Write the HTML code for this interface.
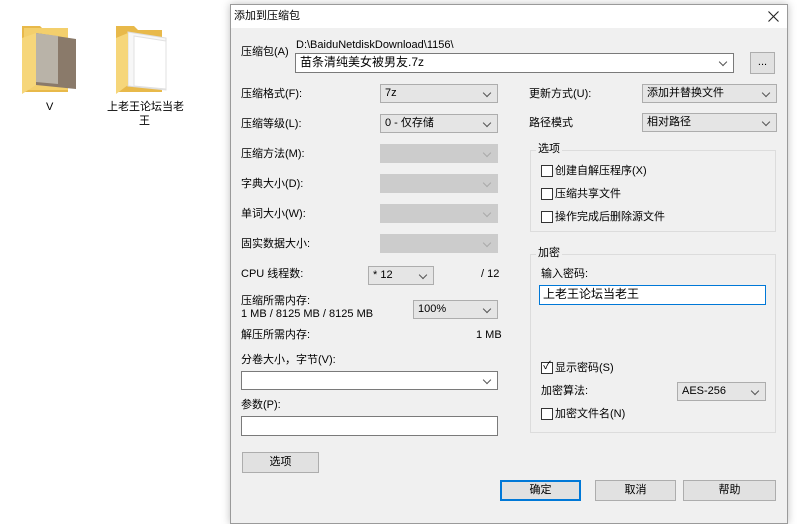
<!DOCTYPE html>
<html><head><meta charset="utf-8"><style>
*{margin:0;padding:0;box-sizing:border-box}
body{width:800px;height:512px;background:#fff;position:relative;overflow:hidden;font-family:"Liberation Sans","Noto Sans CJK SC",sans-serif;font-size:11px;color:#000}
.a{position:absolute;white-space:nowrap;line-height:14px}
.dlg{position:absolute;left:230px;top:4px;width:558px;height:520px;background:#f0f0f0;border:1px solid #9a9a9a;box-shadow:0 0 8px rgba(0,0,0,.25)}
.tb{position:absolute;left:0;top:0;right:0;height:23px;background:#fff}
.cb{position:absolute;height:19px;background:#e5e5e5;border:1px solid #adadad;padding-left:4px;line-height:17px}
.cb.w{background:#fff;border-color:#7a7a7a}
.cb.d{background:#cccccc;border-color:#cccccc}
.cb::after{content:"";position:absolute;right:7px;top:5px;width:5px;height:5px;border-right:1px solid #555;border-bottom:1px solid #555;transform:rotate(45deg)}
.cb.d::after{border-color:#aaa}
.cb.n::after{display:none}
.btn{position:absolute;height:21px;background:#e1e1e1;border:1px solid #adadad;text-align:center;line-height:19px}
.grp{position:absolute;border:1px solid #dcdcdc}
.gt{position:absolute;background:#f0f0f0;padding:0 2px;line-height:14px}
.ck{position:absolute;width:12px;height:12px;border:1px solid #333;background:#fff}
</style></head><body>
<svg style="position:absolute;left:18px;top:18px" width="62" height="80">
<path d="M4 8h18l4 4h24v62H4z" fill="#e8b94a"/>
<rect x="6" y="10" width="44" height="62" fill="#f3cf6c"/>
<path d="M18 15l40 6v50l-40-4z" fill="#8a7a6a"/>
<path d="M18 15l22 3v48l-22-2z" fill="#b9b3a8"/>
<path d="M4 20l14-5v52L4 76z" fill="#f6d67a"/>
</svg>
<div class="a" style="left:46px;top:100px">V</div>
<svg style="position:absolute;left:112px;top:18px" width="62" height="80">
<path d="M4 8h18l4 4h24v62H4z" fill="#e8b94a"/>
<path d="M16 14l38 6v52l-38-4z" fill="#f7f7f7" stroke="#ddd"/>
<path d="M22 18l32 5v48l-32-3z" fill="#fff" stroke="#e0e0e0"/>
<path d="M4 20l12-5v52L4 76z" fill="#f6d67a"/>
</svg>
<div class="a" style="left:107px;top:100px">上老王论坛当老</div>
<div class="a" style="left:139px;top:114px">王</div>

<div class="dlg">
<div class="tb"></div>
<div class="a" style="left:3px;top:4px">添加到压缩包</div>
<svg style="position:absolute;left:537px;top:6px" width="11" height="11"><path d="M0.5 0.5L10.5 10.5M10.5 0.5L0.5 10.5" stroke="#222" stroke-width="1.1"/></svg>

<div class="a" style="left:10px;top:40px">压缩包(A)</div>
<div class="a" style="left:65px;top:33px">D:\BaiduNetdiskDownload\1156\</div>
<div class="cb w" style="left:64px;top:48px;width:439px;height:20px;font-size:12px">苗条清纯美女被男友.7z</div>
<div class="btn" style="left:519px;top:47px;width:25px;height:22px">...</div>

<div class="a" style="left:10px;top:82px">压缩格式(F):</div>
<div class="a" style="left:10px;top:112px">压缩等级(L):</div>
<div class="a" style="left:10px;top:142px">压缩方法(M):</div>
<div class="a" style="left:10px;top:172px">字典大小(D):</div>
<div class="a" style="left:10px;top:202px">单词大小(W):</div>
<div class="a" style="left:10px;top:232px">固实数据大小:</div>
<div class="a" style="left:10px;top:262px">CPU 线程数:</div>
<div class="cb" style="left:149px;top:79px;width:118px">7z</div>
<div class="cb" style="left:149px;top:109px;width:118px">0 - 仅存储</div>
<div class="cb d" style="left:149px;top:139px;width:118px"></div>
<div class="cb d" style="left:149px;top:169px;width:118px"></div>
<div class="cb d" style="left:149px;top:199px;width:118px"></div>
<div class="cb d" style="left:149px;top:229px;width:118px"></div>
<div class="cb" style="left:137px;top:261px;width:66px">* 12</div>
<div class="a" style="left:250px;top:262px">/ 12</div>
<div class="a" style="left:10px;top:289px">压缩所需内存:</div>
<div class="a" style="left:10px;top:302px">1 MB / 8125 MB / 8125 MB</div>
<div class="cb" style="left:182px;top:295px;width:85px">100%</div>
<div class="a" style="left:10px;top:323px">解压所需内存:</div>
<div class="a" style="left:245px;top:323px">1 MB</div>
<div class="a" style="left:10px;top:348px">分卷大小，字节(V):</div>
<div class="cb w" style="left:10px;top:366px;width:257px;height:19px"></div>
<div class="a" style="left:10px;top:393px">参数(P):</div>
<div class="cb w n" style="left:10px;top:411px;width:257px;height:20px"></div>
<div class="btn" style="left:11px;top:447px;width:77px">选项</div>

<div class="a" style="left:298px;top:82px">更新方式(U):</div>
<div class="cb" style="left:411px;top:79px;width:135px">添加并替换文件</div>
<div class="a" style="left:298px;top:111px">路径模式</div>
<div class="cb" style="left:411px;top:108px;width:135px">相对路径</div>

<div class="grp" style="left:299px;top:145px;width:246px;height:82px"></div>
<div class="gt" style="left:305px;top:137px">选项</div>
<div class="ck" style="left:310px;top:160px"></div><div class="a" style="left:324px;top:159px">创建自解压程序(X)</div>
<div class="ck" style="left:310px;top:183px"></div><div class="a" style="left:324px;top:182px">压缩共享文件</div>
<div class="ck" style="left:310px;top:206px"></div><div class="a" style="left:324px;top:205px">操作完成后删除源文件</div>

<div class="grp" style="left:299px;top:249px;width:246px;height:179px"></div>
<div class="gt" style="left:305px;top:241px">加密</div>
<div class="a" style="left:310px;top:262px">输入密码:</div>
<div class="cb w n" style="left:308px;top:280px;width:227px;height:20px;border-color:#0078d7;font-size:12px;padding-left:3px">上老王论坛当老王</div>
<div class="ck" style="left:310px;top:357px"></div><div class="a" style="left:310px;top:354px;font-size:11px;width:12px;text-align:center">✓</div>
<div class="a" style="left:324px;top:356px">显示密码(S)</div>
<div class="a" style="left:310px;top:379px">加密算法:</div>
<div class="cb" style="left:446px;top:377px;width:89px">AES-256</div>
<div class="ck" style="left:310px;top:403px"></div><div class="a" style="left:324px;top:402px">加密文件名(N)</div>

<div class="btn" style="left:269px;top:475px;width:81px;border:2px solid #0078d7;line-height:17px">确定</div>
<div class="btn" style="left:364px;top:475px;width:81px">取消</div>
<div class="btn" style="left:452px;top:475px;width:93px">帮助</div>
</div>
</body></html>
